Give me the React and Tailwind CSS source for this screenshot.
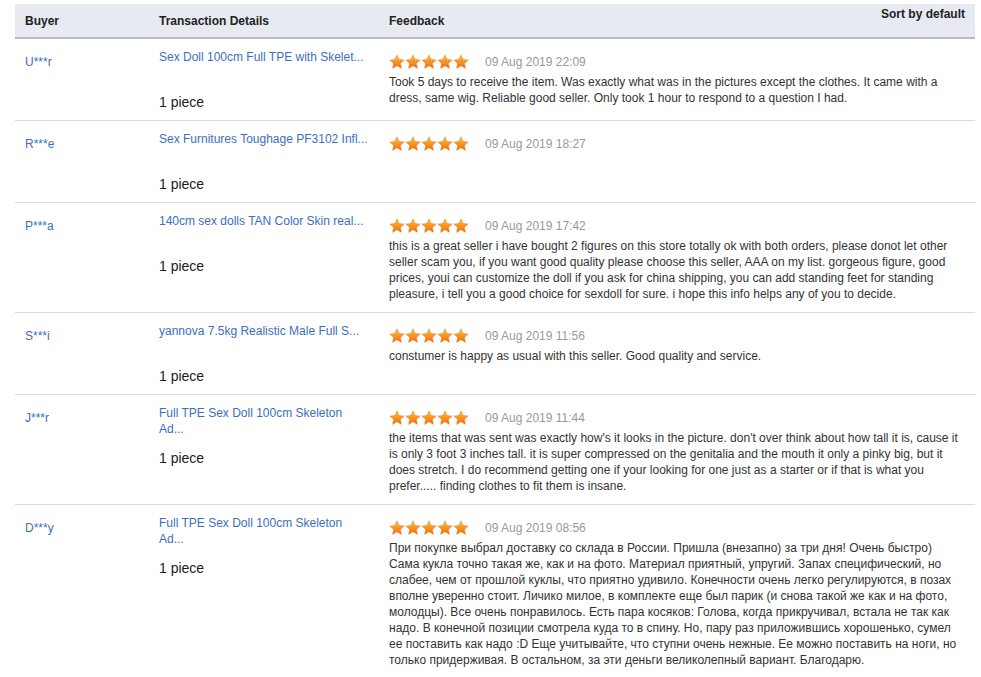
const rows = [
  {
    buyer: 'U***r',
    title: 'Sex Doll 100cm Full TPE with Skelet...',
    date: '09 Aug 2019 22:09',
    text: 'Took 5 days to receive the item. Was exactly what was in the pictures except the clothes. It came with a dress, same wig. Reliable good seller. Only took 1 hour to respond to a question I had.',
  },
  {
    buyer: 'R***e',
    title: 'Sex Furnitures Toughage PF3102 Infl...',
    date: '09 Aug 2019 18:27',
    text: '',
  },
  {
    buyer: 'P***a',
    title: '140cm sex dolls TAN Color Skin real...',
    date: '09 Aug 2019 17:42',
    text: 'this is a great seller i have bought 2 figures on this store totally ok with both orders, please donot let other seller scam you, if you want good quality please choose this seller, AAA on my list. gorgeous figure, good prices, youi can customize the doll if you ask for china shipping, you can add standing feet for standing pleasure, i tell you a good choice for sexdoll for sure. i hope this info helps any of you to decide.',
  },
  {
    buyer: 'S***i',
    title: 'yannova 7.5kg Realistic Male Full S...',
    date: '09 Aug 2019 11:56',
    text: 'constumer is happy as usual with this seller. Good quality and service.',
  },
  {
    buyer: 'J***r',
    title: 'Full TPE Sex Doll 100cm Skeleton Ad...',
    date: '09 Aug 2019 11:44',
    text: "the items that was sent was exactly how's it looks in the picture. don't over think about how tall it is, cause it is only 3 foot 3 inches tall. it is super compressed on the genitalia and the mouth it only a pinky big, but it does stretch. I do recommend getting one if your looking for one just as a starter or if that is what you prefer..... finding clothes to fit them is insane.",
  },
  {
    buyer: 'D***y',
    title: 'Full TPE Sex Doll 100cm Skeleton Ad...',
    date: '09 Aug 2019 08:56',
    text: 'При покупке выбрал доставку со склада в России. Пришла (внезапно) за три дня! Очень быстро) Сама кукла точно такая же, как и на фото. Материал приятный, упругий. Запах специфический, но слабее, чем от прошлой куклы, что приятно удивило. Конечности очень легко регулируются, в позах вполне уверенно стоит. Личико милое, в комплекте еще был парик (и снова такой же как и на фото, молодцы). Все очень понравилось. Есть пара косяков: Голова, когда прикручивал, встала не так как надо. В конечной позиции смотрела куда то в спину. Но, пару раз приложившись хорошенько, сумел ее поставить как надо :D Еще учитывайте, что ступни очень нежные. Ее можно поставить на ноги, но только придерживая. В остальном, за эти деньги великолепный вариант. Благодарю.',
  },
]

function Star() {
  return (
    <svg width="16" height="16" viewBox="0 0 24 24">
      <defs>
        <linearGradient id="sg" x1="0" y1="0" x2="0" y2="1">
          <stop offset="0" stopColor="#ffc04d" />
          <stop offset="0.55" stopColor="#fb8f24" />
          <stop offset="1" stopColor="#ef6a10" />
        </linearGradient>
      </defs>
      <path d="M12 1.2l3.2 7 7.6.8-5.7 5.1 1.6 7.5L12 17.8l-6.7 3.8 1.6-7.5L1.2 9l7.6-.8z" fill="url(#sg)" stroke="#e8740f" strokeWidth="0.6" />
    </svg>
  )
}

export default function App() {
  return (
    <div className="h-[677px] overflow-hidden bg-white pl-[15px] pr-[6px] pt-1 text-[12px] text-[#333]" style={{ fontFamily: '"Liberation Sans", Arial, sans-serif' }}>
      <div className="relative">
        <div className="absolute right-[10px] top-[1px] text-[12px] font-bold text-[#222]">Sort by default</div>
        <div className="flex h-[35px] items-center border-b-2 border-[#b9bdc8] bg-[#e8eaf2] font-bold text-[#222]">
          <div className="w-[134px] pl-[10px]">Buyer</div>
          <div className="w-[230px] pl-[10px]">Transaction Details</div>
          <div className="flex-1 pl-[10px]">Feedback</div>
        </div>
        {rows.map((r, i) => (
          <div key={i} className="flex border-b border-[#dcdcdc]">
            <div className="w-[134px] pl-[10px] pt-[15px] leading-4 text-[#3b6fbd]">{r.buyer}</div>
            <div className="w-[230px] px-[10px] pt-[10px] pb-[8px]">
              <div className="h-8 leading-4 text-[#3b6fbd]">{r.title}</div>
              <div className="mt-[11px] text-[14px] leading-5 text-[#222]">1 piece</div>
            </div>
            <div className="flex-1 pl-[10px] pr-[10px] pt-[11px] pb-[10px]">
              <div className="flex h-[24px] items-center">
                <div className="flex">
                  <Star /><Star /><Star /><Star /><Star />
                </div>
                <span className="ml-4 text-[#999]">{r.date}</span>
              </div>
              {r.text && <div className="leading-4 text-[#333]">{r.text}</div>}
            </div>
          </div>
        ))}
      </div>
    </div>
  )
}
